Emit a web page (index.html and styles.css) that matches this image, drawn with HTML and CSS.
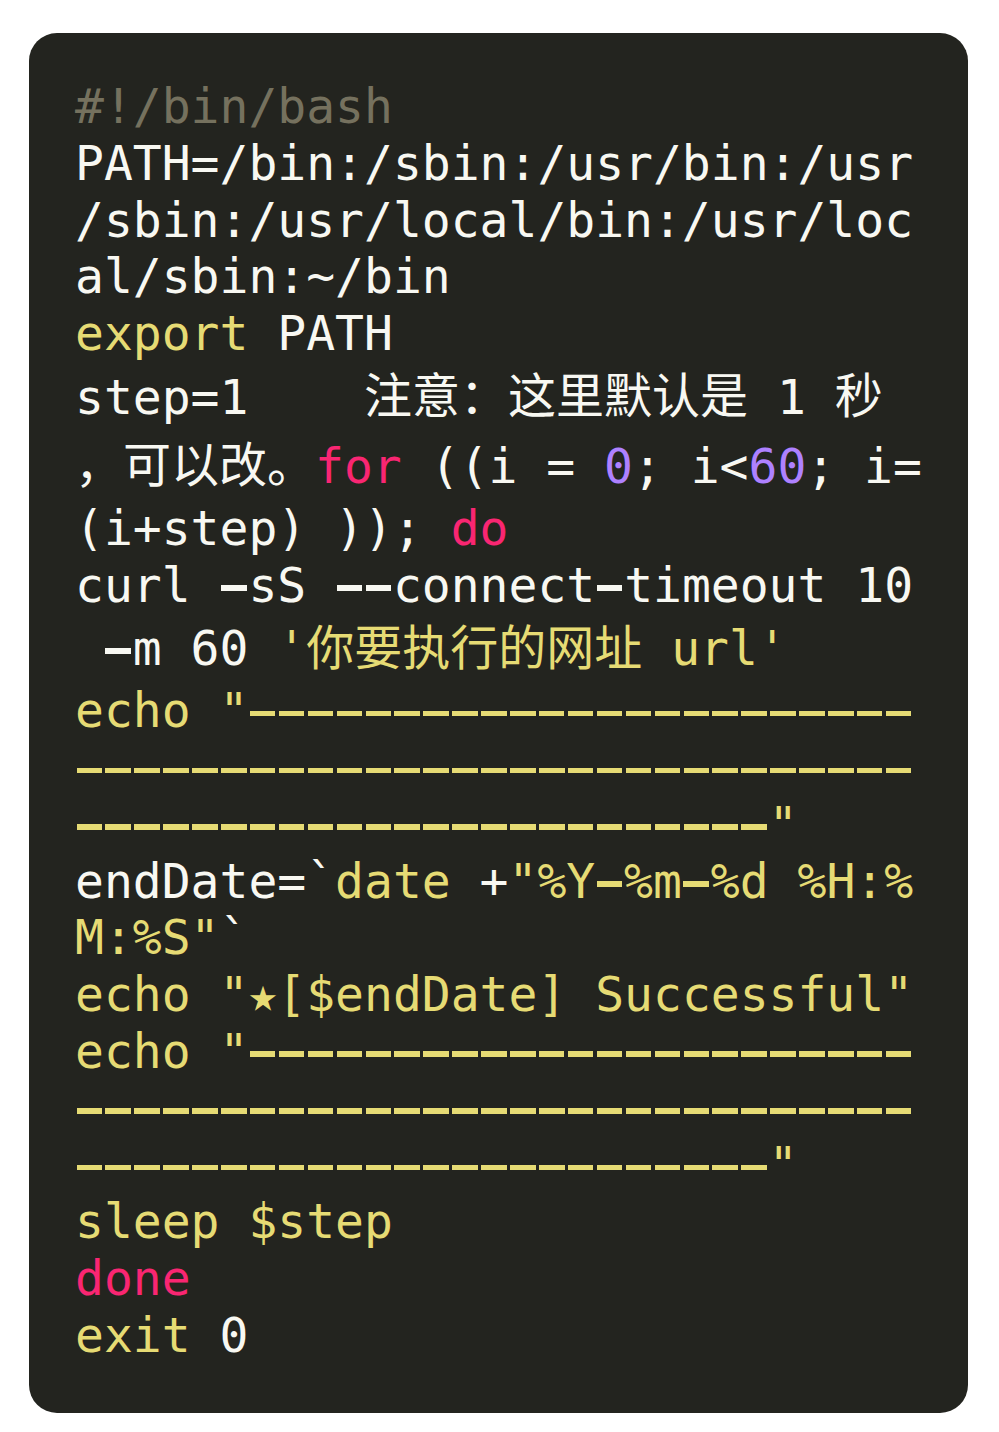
FILE: index.html
```html
<!DOCTYPE html>
<html lang="zh-CN">
<head>
<meta charset="utf-8">
<title>bash script</title>
<link rel="stylesheet" href="styles.css">
</head>
<body>
<div class="card"><pre class="code"><code><span class="c">#!/bin/bash</span>
PATH=/bin:/sbin:/usr/bin:/usr/sbin:/usr/local/bin:/usr/local/sbin:~/bin
<span class="s">export</span> PATH
step=1    <span class="cjk">注意：这里默认是</span> 1 <span class="cjk">秒，可以改。</span><span class="k">for</span> ((i = <span class="n">0</span>; i&lt;<span class="n">60</span>; i=(i+step) )); <span class="k">do</span>
curl <i class="h">-</i>sS <i class="h">-</i><i class="h">-</i>connect<i class="h">-</i>timeout 10 <i class="h">-</i>m 60 <span class="s">'<span class="cjk">你要执行的网址</span> url'</span>
<span class="s">echo</span> <span class="s">"<i class="h">-</i><i class="h">-</i><i class="h">-</i><i class="h">-</i><i class="h">-</i><i class="h">-</i><i class="h">-</i><i class="h">-</i><i class="h">-</i><i class="h">-</i><i class="h">-</i><i class="h">-</i><i class="h">-</i><i class="h">-</i><i class="h">-</i><i class="h">-</i><i class="h">-</i><i class="h">-</i><i class="h">-</i><i class="h">-</i><i class="h">-</i><i class="h">-</i><i class="h">-</i><i class="h">-</i><i class="h">-</i><i class="h">-</i><i class="h">-</i><i class="h">-</i><i class="h">-</i><i class="h">-</i><i class="h">-</i><i class="h">-</i><i class="h">-</i><i class="h">-</i><i class="h">-</i><i class="h">-</i><i class="h">-</i><i class="h">-</i><i class="h">-</i><i class="h">-</i><i class="h">-</i><i class="h">-</i><i class="h">-</i><i class="h">-</i><i class="h">-</i><i class="h">-</i><i class="h">-</i><i class="h">-</i><i class="h">-</i><i class="h">-</i><i class="h">-</i><i class="h">-</i><i class="h">-</i><i class="h">-</i><i class="h">-</i><i class="h">-</i><i class="h">-</i><i class="h">-</i><i class="h">-</i><i class="h">-</i><i class="h">-</i><i class="h">-</i><i class="h">-</i><i class="h">-</i><i class="h">-</i><i class="h">-</i><i class="h">-</i><i class="h">-</i><i class="h">-</i><i class="h">-</i><i class="h">-</i><i class="h">-</i><i class="h">-</i><i class="h">-</i><i class="h">-</i><i class="h">-</i>"</span>
endDate=`<span class="s">date</span> +<span class="s">"%Y<i class="h">-</i>%m<i class="h">-</i>%d %H:%M:%S"</span>`
<span class="s">echo</span> <span class="s">"★[$endDate] Successful"</span>
<span class="s">echo</span> <span class="s">"<i class="h">-</i><i class="h">-</i><i class="h">-</i><i class="h">-</i><i class="h">-</i><i class="h">-</i><i class="h">-</i><i class="h">-</i><i class="h">-</i><i class="h">-</i><i class="h">-</i><i class="h">-</i><i class="h">-</i><i class="h">-</i><i class="h">-</i><i class="h">-</i><i class="h">-</i><i class="h">-</i><i class="h">-</i><i class="h">-</i><i class="h">-</i><i class="h">-</i><i class="h">-</i><i class="h">-</i><i class="h">-</i><i class="h">-</i><i class="h">-</i><i class="h">-</i><i class="h">-</i><i class="h">-</i><i class="h">-</i><i class="h">-</i><i class="h">-</i><i class="h">-</i><i class="h">-</i><i class="h">-</i><i class="h">-</i><i class="h">-</i><i class="h">-</i><i class="h">-</i><i class="h">-</i><i class="h">-</i><i class="h">-</i><i class="h">-</i><i class="h">-</i><i class="h">-</i><i class="h">-</i><i class="h">-</i><i class="h">-</i><i class="h">-</i><i class="h">-</i><i class="h">-</i><i class="h">-</i><i class="h">-</i><i class="h">-</i><i class="h">-</i><i class="h">-</i><i class="h">-</i><i class="h">-</i><i class="h">-</i><i class="h">-</i><i class="h">-</i><i class="h">-</i><i class="h">-</i><i class="h">-</i><i class="h">-</i><i class="h">-</i><i class="h">-</i><i class="h">-</i><i class="h">-</i><i class="h">-</i><i class="h">-</i><i class="h">-</i><i class="h">-</i><i class="h">-</i><i class="h">-</i>"</span>
<span class="s">sleep</span> <span class="s">$step</span>
<span class="k">done</span>
<span class="s">exit</span> 0</code></pre></div>
</body>
</html>
```

FILE: styles.css
```css
html, body {
  margin: 0;
  padding: 0;
  background: #ffffff;
}

body {
  padding: 33px 31px 19px 29px;
}

.card {
  background: #23241f;
  border-radius: 28px;
  padding: 45px 42px 50px 46px;
}

.code {
  margin: 0;
  font-family: "DejaVu Sans Mono", "Noto Sans CJK SC", monospace;
  font-size: 48px;
  line-height: 56.75px;
  color: #f8f8f2;
  white-space: break-spaces;
  word-break: break-all;
  line-break: anywhere;
}

.code code {
  font: inherit;
}

.c { color: #75715e; }
.s { color: #e6db74; }
.k { color: #f92672; }
.n { color: #ae81ff; }

/* wide hyphens, as in the reference's monospace face:
   the real "-" glyph stays, a bar lies over it to lengthen it */
.h {
  position: relative;
  font-style: normal;
}

.h::after {
  content: "";
  position: absolute;
  left: 1.5px;
  width: 25.5px;
  top: 28.5px;
  height: 5.5px;
  background: currentColor;
}

.cjk::after {
  content: "";
  display: inline-block;
  width: 0;
  height: 69px;
  vertical-align: -17.5px;
}
```
